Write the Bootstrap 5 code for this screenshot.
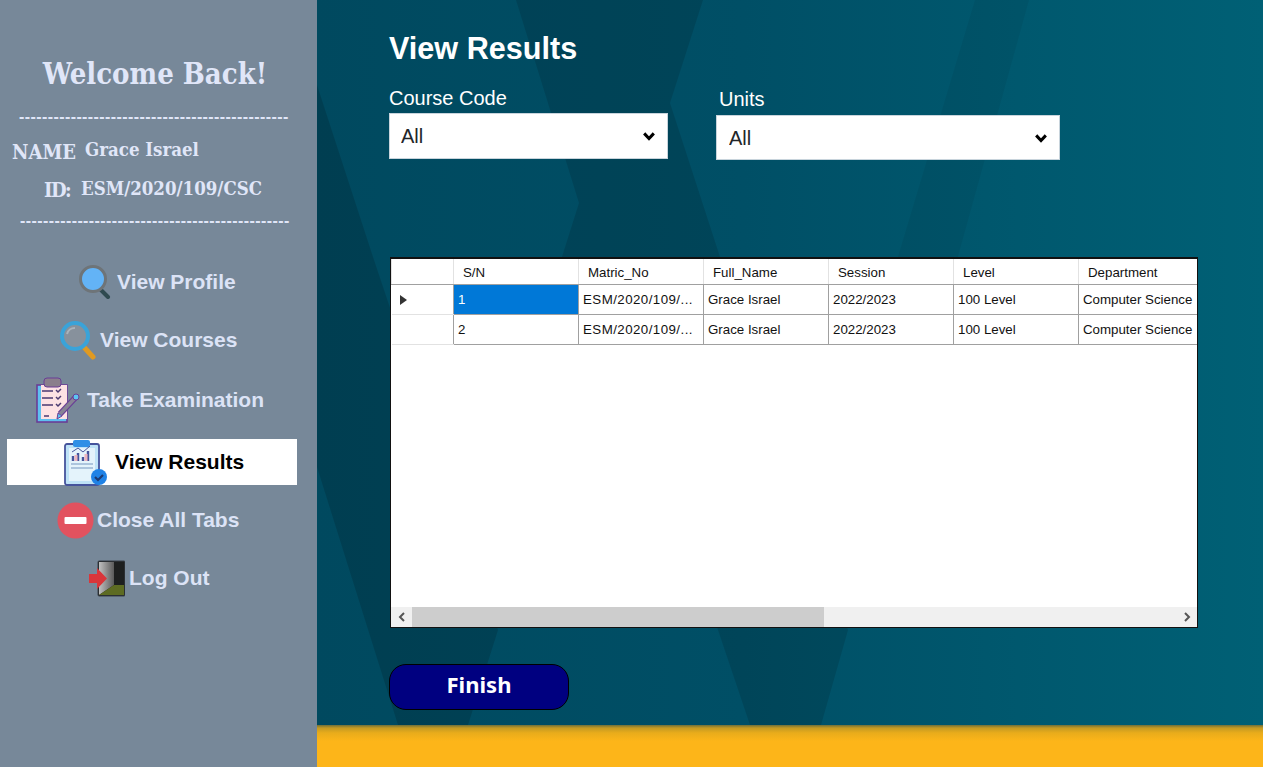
<!DOCTYPE html>
<html lang="en">
<head>
<meta charset="utf-8">
<title>View Results</title>
<link href="https://cdn.jsdelivr.net/npm/bootstrap@5.3.0/dist/css/bootstrap.min.css" rel="stylesheet">
<style>
html,body{height:100%;overflow:hidden;margin:0}
body{font-family:"Liberation Sans",Arial,sans-serif}
.app-shell{width:1263px;height:767px}
.side-panel{width:317px;flex:none;background:#778899;color:#e0e6f8}
.slab{font-family:"DejaVu Serif Condensed","DejaVu Serif",serif;font-weight:700}
.welcome-title{font-size:29px;line-height:36px;margin:0;padding-top:56px;text-align:center;width:310px}
.dash-line{font-family:"Liberation Sans",sans-serif;font-size:16px;line-height:18px;font-weight:700;white-space:nowrap;overflow:hidden;width:270px;margin-left:19px;letter-spacing:.41px}
.dash-one{margin-top:16px}
.info-row{height:24px;align-items:center}
.info-key{font-size:20px;font-weight:700}
.info-val{font-size:18.5px}
.row-name{margin-top:12px;padding-left:12px}
.row-name .info-key{width:73px;padding-top:3px}
.row-id{margin-top:15px;padding-left:44px}
.row-id .info-key{width:37px;padding-top:2px;letter-spacing:-1.5px}
.dash-two{margin-top:11px;margin-left:20px}
.nav-stack{margin-top:29px;display:flex;flex-direction:column;padding:0;list-style:none}
.nav-entry{height:46px;margin:0 20px 12px 7px;display:flex;align-items:center;font-size:21px;font-weight:700;white-space:nowrap;color:#dce3f6}
.nav-entry svg{flex:none}
.nav-entry.is-current{background:#fff;color:#000;margin-top:2px}
.entry-profile{padding-left:71px;gap:6px}
.entry-courses{padding-left:52px;gap:3px;margin-bottom:14px}
.entry-exam{padding-left:29px;gap:7px;margin-bottom:14px}
.entry-results{padding-left:57px;gap:7px}
.entry-close{padding-left:50px;gap:3px}
.entry-logout{padding-left:81px;gap:4px}
.main-pane{min-width:0;position:relative;background:linear-gradient(90deg,#00495f 0,#004f66 45%,#006075 100%)}
.main-art{position:absolute;inset:0;width:100%;height:100%}
.main-body{position:relative;padding:31px 0 0 72px}
.page-heading{font-size:30.6px;line-height:34px;font-weight:700;color:#fff;margin:0}
.filter-row{margin-top:21px}
.filter-a{width:279px}
.filter-b{width:344px;margin-left:48px}
.filter-label{font-size:20px;line-height:24px;color:#fff;margin:0 0 3px;display:block}
.filter-b .filter-label{margin:1px 0 4px 3px}
.filter-pick{border:0;border-radius:0;height:46px;font-size:20px;color:#212529;padding:0 40px 0 12px;box-shadow:0 0 0 1px #c8d4dc inset;background-position:right 12px center;background-size:14px 14px;background-image:url("data:image/svg+xml,%3csvg xmlns='http://www.w3.org/2000/svg' viewBox='0 0 16 16'%3e%3cpath fill='none' stroke='%23000' stroke-width='3.4' d='M2.5 5l5.5 6 5.5-6'/%3e%3c/svg%3e")}
.filter-b .filter-pick{height:45px;padding-left:13px}
.grid-frame{width:808px;height:371px;margin:97px 0 0 1px;background:#fff;border:1px solid #111;border-width:2px 1px 1px;flex-direction:column;display:flex;overflow:hidden}
.grid-scroll{flex:1;overflow:hidden}
.result-grid.table{table-layout:fixed;width:806px;margin:0;font-size:13.3px;color:#111;border-collapse:collapse}
.result-grid.table>*>*>*{padding:2px 3px 0 4px;border:1px solid #a0a0a0;vertical-align:middle;white-space:nowrap;overflow:hidden;color:#111;background:transparent;box-shadow:none;line-height:1.2}
.result-grid.table thead th{height:25px;font-weight:400;border-color:#e2e2e2;border-bottom-color:#a0a0a0;padding-left:9px;padding-top:3px;border-top:0}
.result-grid.table tbody td{height:30px}
.result-grid.table tbody th{font-weight:400;border-left:0;border-right-color:#a0a0a0;border-top-color:#e2e2e2;border-bottom-color:#e2e2e2;padding-left:8px}
.result-grid.table>*>*>*:last-child{border-right:0}
.result-grid.table .cell-picked{background:#0078d7;color:#fff}
.result-grid.table .matric-cell{letter-spacing:.45px}
.tri-mark{display:inline-block;width:0;height:0;border-left:7px solid #333;border-top:5px solid transparent;border-bottom:5px solid transparent;vertical-align:-1px}
.hscroll{height:20px;background:#f0f0f0;align-items:stretch}
.hscroll-arrow{width:21px;flex:none;display:flex;align-items:center;justify-content:center}
.hscroll-thumb{width:412px;background:#cdcdcd}
.finish-btn{display:block;width:180px;height:46px;margin-top:36px;border:1px solid #000;border-radius:17px;background:#000080;color:#fff;font-family:"Noto Sans",sans-serif;font-weight:700;font-size:22px;padding:0 0 6px;line-height:1}
.gold-bar{position:relative;height:42px;flex:none;background:linear-gradient(180deg,#6e6f3a 0,#c49a22 3px,#e9ac1b 8px,#fdb519 16px)}
</style>
</head>
<body>
<div class="app-shell d-flex">
  <aside class="side-panel">
    <h1 class="welcome-title slab">Welcome Back!</h1>
    <div class="dash-line dash-one">-----------------------------------------------</div>
    <div class="info-row row-name d-flex slab"><span class="info-key">NAME</span><span class="info-val">Grace Israel</span></div>
    <div class="info-row row-id d-flex slab"><span class="info-key">ID:</span><span class="info-val">ESM/2020/109/CSC</span></div>
    <div class="dash-line dash-two">-----------------------------------------------</div>
    <ul class="nav-stack">
      <li class="nav-entry entry-profile">
        <svg width="33" height="34" viewBox="0 0 33 34"><path d="M21 23l9 9" stroke="#2f4a50" stroke-width="4" stroke-linecap="round"/><circle cx="15" cy="14" r="12.5" fill="#63b3f6" stroke="#6e7478" stroke-width="3"/></svg>
        <span>View Profile</span>
      </li>
      <li class="nav-entry entry-courses">
        <svg width="38" height="40" viewBox="0 0 38 40"><path d="M23 25l11 12" stroke="#e09a22" stroke-width="5" stroke-linecap="round"/><circle cx="16" cy="16" r="13" fill="#87919c" stroke="#3aa3d9" stroke-width="4"/><path d="M8 14a8 8 0 0 1 8-6" stroke="#aab3bb" stroke-width="2" fill="none"/></svg>
        <span>View Courses</span>
      </li>
      <li class="nav-entry entry-exam">
        <svg width="44" height="46" viewBox="0 0 44 46"><rect x="1" y="8" width="30" height="37" fill="#5fc0f0" stroke="#6a3d96" stroke-width="1.6"/><rect x="5" y="8" width="26" height="34" fill="#fde2e4"/><rect x="8" y="1" width="17" height="9" rx="3" fill="#8a7f8c" stroke="#6a3d96"/><path d="M6 14h11M6 21h11M6 28h11M8 39h5" stroke="#4b3a70" stroke-width="1.6"/><path d="M20 13l2 2 3-3M20 20l2 2 3-3M20 27l2 2 3-3" stroke="#4b3a70" stroke-width="1.5" fill="none"/><path d="M24 37l15-16" stroke="#6a3d96" stroke-width="6"/><path d="M24 37l15-16" stroke="#878395" stroke-width="3.6"/><circle cx="40" cy="20" r="3" fill="#5cc4f2" stroke="#6a3d96"/><path d="M21 42l1-6 4 3z" fill="#5cc4f2" stroke="#6a3d96"/></svg>
        <span>Take Examination</span>
      </li>
      <li class="nav-entry entry-results is-current">
        <svg width="44" height="47" viewBox="0 0 44 47"><rect x="1" y="5" width="34" height="41" rx="2" fill="#bfe3f7" stroke="#46549c" stroke-width="1.8"/><rect x="5" y="9" width="26" height="33" fill="#e4f3fb"/><rect x="9" y="1" width="17" height="7" rx="2" fill="#2f8fe6"/><path d="M9 22v-5M14 22v-8M19 22v-4M24 22v-10" stroke="#46549c" stroke-width="2.4"/><path d="M12 22v-6M22 22v-7" stroke="#eeb4bd" stroke-width="3"/><path d="M8 13l6-4 5 4 7-6" stroke="#46549c" stroke-width="1" fill="none"/><path d="M7 25h22M7 29h22" stroke="#9ab7d4" stroke-width="1.4"/><circle cx="35" cy="38" r="8" fill="#1f82e6"/><path d="M31 38l3 3 5-5" stroke="#1c3a72" stroke-width="2.2" fill="none"/></svg>
        <span>View Results</span>
      </li>
      <li class="nav-entry entry-close">
        <svg width="37" height="37" viewBox="0 0 37 37"><circle cx="18.5" cy="18.5" r="18" fill="#e2525f"/><rect x="7.500" y="15" width="22" height="7" rx="1" fill="#fff"/></svg>
        <span>Close All Tabs</span>
      </li>
      <li class="nav-entry entry-logout">
        <svg width="37" height="37" viewBox="0 0 37 37"><defs><linearGradient id="doorLeaf" x1="0" x2="1"><stop offset="0" stop-color="#c0c0c0"/><stop offset="1" stop-color="#5a5a5a"/></linearGradient></defs><rect x="10" y="1" width="27" height="35" rx="1" fill="#1d1f1f" stroke="#3a4048"/><path d="M11 2h15v23l-15 10z" fill="url(#doorLeaf)"/><path d="M11 35l15-10h10v10z" fill="#5d6b22"/><path d="M1 14h8V8l10 10.500-10 10.500v-6h-8z" fill="#d9363a"/></svg>
        <span>Log Out</span>
      </li>
    </ul>
  </aside>
  <main class="flex-grow-1 d-flex flex-column">
    <div class="main-pane flex-grow-1">
      <svg class="main-art" viewBox="0 0 946 725" preserveAspectRatio="none" aria-hidden="true">
        <path d="M199 0H386L353 103 404 260 531 630 504 725H433L401 630 290 300 244 260 262 203Z" fill="#000" fill-opacity=".12"/>
        <path d="M0 85 57 260 181 630 151 725H81L0 467Z" fill="#000" fill-opacity=".14"/>
        <path d="M658 0H712L640 260 620 330H560L580 260Z" fill="#000" fill-opacity=".05"/>
      </svg>
      <div class="main-body">
        <h2 class="page-heading">View Results</h2>
        <div class="filter-row d-flex">
          <div class="filter-a">
            <label class="filter-label" for="courseCode">Course Code</label>
            <select class="form-select filter-pick" id="courseCode"><option>All</option></select>
          </div>
          <div class="filter-b">
            <label class="filter-label" for="unitsPick">Units</label>
            <select class="form-select filter-pick" id="unitsPick"><option>All</option></select>
          </div>
        </div>
        <div class="grid-frame">
          <div class="grid-scroll">
            <table class="table result-grid">
              <colgroup><col style="width:62px"><col style="width:125px"><col style="width:125px"><col style="width:125px"><col style="width:125px"><col style="width:125px"><col style="width:119px"></colgroup>
              <thead><tr><th></th><th>S/N</th><th>Matric_No</th><th>Full_Name</th><th>Session</th><th>Level</th><th>Department</th></tr></thead>
              <tbody>
                <tr><th><span class="tri-mark"></span></th><td class="cell-picked">1</td><td class="matric-cell">ESM/2020/109/...</td><td>Grace Israel</td><td>2022/2023</td><td>100 Level</td><td>Computer Science</td></tr>
                <tr><th></th><td>2</td><td class="matric-cell">ESM/2020/109/...</td><td>Grace Israel</td><td>2022/2023</td><td>100 Level</td><td>Computer Science</td></tr>
              </tbody>
            </table>
          </div>
          <div class="hscroll d-flex">
            <span class="hscroll-arrow"><svg width="10" height="10" viewBox="0 0 10 10"><path d="M7 1L3 5l4 4" fill="none" stroke="#555" stroke-width="2"/></svg></span>
            <span class="hscroll-thumb"></span>
            <span class="flex-grow-1"></span>
            <span class="hscroll-arrow"><svg width="10" height="10" viewBox="0 0 10 10"><path d="M3 1l4 4-4 4" fill="none" stroke="#555" stroke-width="2"/></svg></span>
          </div>
        </div>
        <button type="button" class="finish-btn">Finish</button>
      </div>
    </div>
    <div class="gold-bar"></div>
  </main>
</div>
<script src="https://cdn.jsdelivr.net/npm/bootstrap@5.3.0/dist/js/bootstrap.bundle.min.js"></script>
</body>
</html>
